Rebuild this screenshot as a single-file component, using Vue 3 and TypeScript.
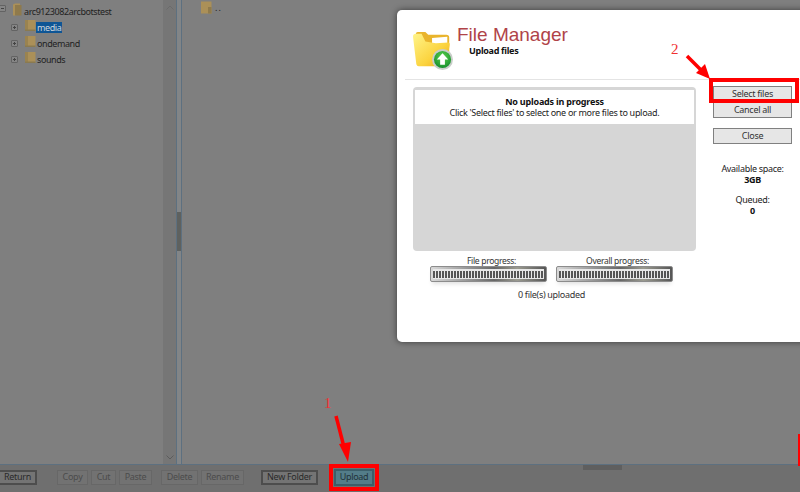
<script setup lang="ts">
const folders = ['media', 'ondemand', 'sounds']
const tools = ['Copy', 'Cut', 'Paste']
const tools2 = ['Delete', 'Rename']
const bars = [
  { label: 'File progress:' },
  { label: 'Overall progress:' },
]
</script>

<template>
  <div class="page">
    <div class="main">
      <div class="tree-pane">
        <div class="tree">
          <div class="tree-row root">
            <span class="expander root-exp"><i class="h"></i></span>
            <svg class="folder" viewBox="0 0 11 13"><path d="M1 1.500 3 .500h5v10.500L3 12.500H1z" fill="#ab9058"/><path d="M3 2h6.500v10.500H3z" fill="#8f7a4c"/></svg>
            <span class="label">arc9123082arcbotstest</span>
          </div>
          <div v-for="f in folders" :key="f" class="tree-row child">
            <span class="expander"><i class="h"></i><i class="v"></i></span>
            <svg class="folder" viewBox="0 0 11 13"><path d="M0 1h10.500v11H0z" fill="#ab9058"/><path d="M0 1h3v10H0z" fill="#9a8350"/><path d="M0 10.500h10.500V12H0z" fill="#8a7a50"/></svg>
            <span class="label" :class="{ selected: f === 'media' }">{{ f }}</span>
          </div>
        </div>
        <div class="scrollbar">
          <svg class="chev" viewBox="0 0 8 5"><path d="M.5 4.500 4 1l3.500 3.500" fill="none" stroke="#6b6b6b"/></svg>
          <svg class="chev" viewBox="0 0 8 5"><path d="M.5.500 4 4 7.500.500" fill="none" stroke="#5c5c5c"/></svg>
        </div>
      </div>
      <div class="splitter"><div class="thumb"></div></div>
      <div class="files-pane">
        <div class="file-row">
          <svg class="folder" viewBox="0 0 11 13"><path d="M0 .500h10.500v12H0z" fill="#ab9058"/><path d="M7 6h3.500v6.500H7z" fill="#8f7a4c"/></svg>
          <span class="label">..</span>
        </div>
      </div>
    </div>

    <div class="toolbar">
      <button class="btn strong">Return</button>
      <div class="group first">
        <button v-for="t in tools" :key="t" class="btn faint">{{ t }}</button>
      </div>
      <div class="group second">
        <button v-for="t in tools2" :key="t" class="btn faint">{{ t }}</button>
      </div>
      <button class="btn strong newfolder">New Folder</button>
      <button class="btn upload">Upload</button>
    </div>

    <div class="grip"></div>

    <div class="modal">
      <header class="head">
        <svg class="big-icon" viewBox="0 0 42 42">
          <defs>
            <linearGradient id="fy" x1="0" y1="0" x2="1" y2="1">
              <stop offset="0" stop-color="#fff48a"/>
              <stop offset=".6" stop-color="#fbd440"/>
              <stop offset="1" stop-color="#eda818"/>
            </linearGradient>
            <radialGradient id="gr" cx=".5" cy=".35" r=".7">
              <stop offset="0" stop-color="#5fd24e"/>
              <stop offset="1" stop-color="#0f8a2a"/>
            </radialGradient>
          </defs>
          <path d="M3 4q0-2 2-2h8l3 3h19q3 0 3 3v24H6z" fill="#e9b42c"/>
          <path d="M20 8.500 36 7v8H20z" fill="#fff"/>
          <path d="M0 7Q0 4 3 4H9L13 12 24 14 37 13Q39 13 38.500 16L35 36Q34.500 38 32 38H6Q4 38 3.500 36Z" fill="url(#fy)"/>
          <circle cx="31" cy="31" r="11" fill="#c9cdc9"/>
          <circle cx="31" cy="31" r="9" fill="url(#gr)"/>
          <path d="M31 24.500 37 31h-3.500v5.500h-5V31H25z" fill="#fff"/>
        </svg>
        <div class="titles">
          <h1>File Manager</h1>
          <h2>Upload files</h2>
        </div>
      </header>
      <div class="body">
        <div class="left">
          <div class="queue">
            <div class="status">
              <strong>No uploads in progress</strong>
              <span>Click 'Select files' to select one or more files to upload.</span>
            </div>
          </div>
          <div class="progress-row">
            <div v-for="b in bars" :key="b.label" class="progress">
              <div class="p-label">{{ b.label }}</div>
              <div class="bar">
                <div class="ticks"></div>
              </div>
            </div>
          </div>
          <div class="count">0 file(s) uploaded</div>
        </div>
        <aside class="side">
          <button class="mbtn">Select files</button>
          <button class="mbtn">Cancel all</button>
          <button class="mbtn close">Close</button>
          <div class="stat first-stat"><span>Available space:</span><b>3GB</b></div>
          <div class="stat"><span>Queued:</span><b>0</b></div>
        </aside>
      </div>
    </div>

    <svg class="annot" viewBox="0 0 800 492">
      <path d="M336 416 344.500 449" stroke="#f00" stroke-width="3.500" fill="none"/>
      <path d="M339 444 348 462 351 442z" fill="#f00"/>
      <path d="M687 56 702 71" stroke="#f00" stroke-width="3.500" fill="none"/>
      <path d="M696 73 710 79 705 64z" fill="#f00"/>
    </svg>
    <div class="num n1">1</div>
    <div class="num n2">2</div>
    <div class="redbox box1"></div>
    <div class="redbox box2"></div>
    <div class="edge-mark"></div>
  </div>
</template>

<style>
html, body { margin: 0; padding: 0; background: #7f7f7f; }
</style>

<style scoped>
.page {
  position: relative;
  width: 800px;
  height: 492px;
  overflow: hidden;
  display: flex;
  flex-direction: column;
  background: #7f7f7f;
  font-family: "Noto Sans", "Liberation Sans", sans-serif;
  font-size: 9px;
  letter-spacing: -.3px;
  color: #222;
}
.main { display: flex; height: 465px; border-bottom: 1px solid #5d7080; box-sizing: border-box; flex: none; }
.tree-pane {
  width: 177px;
  box-sizing: border-box;
  border-right: 1px solid #5d7080;
  display: flex;
}
.tree { flex: 1; padding-top: 3px; letter-spacing: -.42px; }
.tree-row { display: flex; align-items: center; height: 16px; }
.child { padding-left: 11px; }
.expander {
  position: relative;
  width: 7px;
  height: 7px;
  box-sizing: border-box;
  border: 1px solid #636363;
  border-radius: 1px;
  background: #858585;
  margin-right: 7px;
  flex: none;
}
.root-exp { margin-left: -1px; margin-right: 6px; margin-top: -6px; }
.expander .h { position: absolute; left: 1px; right: 1px; top: 2px; height: 1px; background: #444; }
.expander .v { position: absolute; top: 1px; bottom: 1px; left: 2px; width: 1px; background: #444; }
.folder { width: 11px; height: 13px; flex: none; margin-top: -4px; }
.label { margin-left: 0; padding: 0 1px; line-height: 11px; white-space: nowrap; }
.selected { background: #0e5595; color: #cfd6dd; }
.scrollbar {
  width: 13px;
  background: #767676;
  display: flex;
  flex-direction: column;
  justify-content: space-between;
  align-items: center;
  padding: 5px 0 4px;
}
.chev { width: 8px; height: 5px; }
.splitter { width: 4px; background: #828587; position: relative; }
.thumb { position: absolute; left: 0; right: 0; top: 212px; height: 39px; background: #5e615f; }
.files-pane { flex: 1; border-left: 1px solid #5d7080; padding: 1px 0 0 19px; }
.file-row { display: flex; align-items: center; }
.file-row .folder { margin-top: 0; }
.file-row .label { margin-left: 2px; letter-spacing: 1px; }

.toolbar {
  height: 27px;
  background: #6f6f6f;
  display: flex;
  align-items: center;
  padding-bottom: 3px;
  box-sizing: border-box;
  flex: none;
}
.btn {
  height: 15px;
  padding: 0;
  box-sizing: border-box;
  font: inherit;
  letter-spacing: inherit;
  line-height: 12px;
  background: #747474;
  color: #2a2a2a;
  border: 1px solid #4a4a4a;
}
.strong { border: 2px solid #4d4d4d; line-height: 10px; }
.toolbar > .strong:first-child { width: 37px; border-left: 0; }
.faint { border: 1px solid #676767; color: #4c4c4c; background: #727272; }
.group { display: flex; gap: 3px; }
.first { margin-left: 20px; }
.first .btn:nth-child(1) { width: 31px; }
.first .btn:nth-child(2) { width: 25px; }
.first .btn:nth-child(3) { width: 33px; }
.second { margin-left: 9px; }
.second .btn:nth-child(1) { width: 37px; }
.second .btn:nth-child(2) { width: 43px; }
.newfolder { width: 57px; margin-left: 17px; }
.upload {
  width: 40px;
  height: 17px;
  margin-left: 16px;
  background: #537d89;
  border: 2px solid #3c5f6a;
  line-height: 10px;
  color: #223238;
}
.grip { position: absolute; left: 583px; top: 465px; width: 39px; height: 5px; background: #5f5f5f; }

.modal {
  position: absolute;
  left: 397px;
  top: 10px;
  width: 420px;
  height: 332px;
  box-sizing: border-box;
  background: #fff;
  border-radius: 5px;
  box-shadow: 0 0 6px rgba(30, 30, 30, .7);
  color: #222;
}
.head {
  height: 70px;
  margin-left: 8px;
  padding-left: 8px;
  box-sizing: border-box;
  display: flex;
  border-bottom: 1px solid #e4e4e4;
}
.big-icon { width: 40px; height: 40px; margin-top: 20px; flex: none; }
.titles { margin-left: 4px; padding-top: 13px; }
h1 {
  margin: 0;
  font: 400 19px/24px "Liberation Sans", sans-serif;
  letter-spacing: 0;
  color: #b04348;
}
h2 {
  margin: -2px 0 0 12px;
  font: 700 9px/12px "Noto Sans", sans-serif;
  color: #111;
}
.body { display: flex; padding: 7px 0 0 16px; }
.left { width: 283px; }
.queue {
  height: 164px;
  box-sizing: border-box;
  background: #d6d6d6;
  border-radius: 4px;
  padding: 3px 2px 0;
}
.status {
  height: 34px;
  background: #fff;
  display: flex;
  flex-direction: column;
  align-items: center;
  justify-content: center;
  line-height: 11px;
}
.status strong { color: #111; letter-spacing: -.2px; }
.progress-row { display: flex; justify-content: center; gap: 9px; margin-top: 4px; padding-right: 6px; }
.progress { width: 117px; text-align: center; }
.p-label { line-height: 11px; font-size: 8.500px; padding-left: 6px; color: #333; }
.bar {
  height: 16px;
  box-sizing: border-box;
  border-radius: 2px;
  border: 1px solid #8c8c8c;
  background: linear-gradient(90deg, #d9d9d9, #666 55%, #9a9a90 75%, #555);
  padding: 2px;
  box-shadow: 0 4px 4px -2px rgba(0, 0, 0, .12);
}
.ticks {
  height: 100%;
  background:
    repeating-linear-gradient(90deg, #555 0 2px, transparent 2px 3px) center / 100% 7px no-repeat,
    #e8e8e8;
}
.count { text-align: center; margin-top: 7px; line-height: 12px; padding-right: 6px; color: #333; }
.side { margin-left: 17px; width: 79px; margin-top: -1px; display: flex; flex-direction: column; }
.mbtn {
  height: 16px;
  padding: 0;
  box-sizing: border-box;
  font: inherit;
  letter-spacing: inherit;
  line-height: 12px;
  background: #e6e6e6;
  color: #333;
  border: 1px solid #808080;
  flex: none;
}
.close { margin-top: 10px; }
.stat { text-align: center; line-height: 11px; margin-top: 9px; }
.stat span, .stat b { display: block; height: 11px; }
.stat b { color: #111; }
.first-stat { margin-top: 19px; }

.annot { position: absolute; inset: 0; width: 800px; height: 492px; pointer-events: none; }
.num { position: absolute; font: 15px/15px "Liberation Serif", serif; color: #f03030; letter-spacing: 0; }
.n1 { left: 324px; top: 396px; }
.n2 { left: 671px; top: 42px; }
.redbox { position: absolute; box-sizing: border-box; border: 4px solid #f00; }
.box1 { left: 329px; top: 464px; width: 50px; height: 27px; }
.box2 { left: 709px; top: 78px; width: 90px; height: 25px; }
.edge-mark { position: absolute; left: 798px; top: 434px; width: 2px; height: 32px; background: #f00; }
</style>
